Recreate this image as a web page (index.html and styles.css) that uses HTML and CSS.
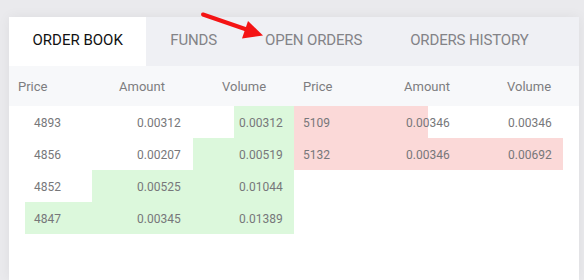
FILE: index.html
```
<!DOCTYPE html>
<html>
<head>
<meta charset="utf-8">
<link rel="stylesheet" href="styles.css">
</head>
<body>
<div class="card">
  <nav class="tabs">
    <div class="tab active">ORDER BOOK</div>
    <div class="tab">FUNDS</div>
    <div class="tab">OPEN ORDERS</div>
    <div class="tab">ORDERS HISTORY</div>
  </nav>
  <div class="head">
    <div class="head-half"><span>Price</span><span>Amount</span><span>Volume</span></div>
    <div class="head-half"><span>Price</span><span>Amount</span><span>Volume</span></div>
  </div>
  <div class="book">
    <div class="side">
      <div class="row bid" style="--depth:22.46%"><span>4893</span><span>0.00312</span><span>0.00312</span></div>
      <div class="row bid" style="--depth:37.37%"><span>4856</span><span>0.00207</span><span>0.00519</span></div>
      <div class="row bid" style="--depth:75.16%"><span>4852</span><span>0.00525</span><span>0.01044</span></div>
      <div class="row bid" style="--depth:100%"><span>4847</span><span>0.00345</span><span>0.01389</span></div>
    </div>
    <div class="side">
      <div class="row ask" style="--depth:50%"><span>5109</span><span>0.00346</span><span>0.00346</span></div>
      <div class="row ask" style="--depth:100%"><span>5132</span><span>0.00346</span><span>0.00692</span></div>
    </div>
  </div>
</div>
<svg class="arrow" width="80" height="40" viewBox="0 0 80 40">
  <line x1="3" y1="4.5" x2="48" y2="20" stroke="#f41414" stroke-width="4" stroke-linecap="round"/>
  <polygon points="63,25.5 48,11 42,28.5" fill="#f41414"/>
</svg>
</body>
</html>
```
FILE: styles.css
```
* { box-sizing: border-box; }
html, body { margin: 0; padding: 0; }
body {
  background: #eaeaed;
  font-family: Roboto, "Liberation Sans", sans-serif;
  height: 280px;
  overflow: hidden;
  padding: 17px 6px 0 9px;
}
.card {
  background: #ffffff;
  width: 570px;
  height: 263px;
  box-shadow: 0 0 12px rgba(0, 0, 0, 0.06);
}
.tabs {
  display: flex;
  height: 49px;
  background: #eff0f4;
}
.tab {
  display: flex;
  align-items: center;
  padding: 0 24px 4px;
  font-size: 15px;
  letter-spacing: -0.15px;
  color: #838387;
}
.tab.active {
  background: #ffffff;
  color: #111111;
  letter-spacing: 0;
  padding: 0 23.5px 4px;
}
.head {
  display: flex;
  height: 40px;
  background: #f7f8fa;
}
.head-half {
  flex: 1;
  display: grid;
  grid-template-columns: 101px 103px 1fr;
  align-items: center;
  padding-left: 9px;
  font-size: 13px;
  color: #7d7d80;
}
.book {
  display: flex;
  padding: 0 16px;
}
.side { flex: 1; }
.row {
  display: grid;
  grid-template-columns: 103px 102px 1fr;
  align-items: center;
  height: 32px;
  padding: 2px 0 0 9px;
  font-size: 12px;
  color: #77777a;
}
.row.bid {
  background: linear-gradient(to left, #dcf8dc var(--depth), transparent var(--depth));
}
.row.ask {
  background: linear-gradient(to right, #fbd9d8 var(--depth), transparent var(--depth));
}
.arrow {
  position: absolute;
  left: 200px;
  top: 10px;
}
```
